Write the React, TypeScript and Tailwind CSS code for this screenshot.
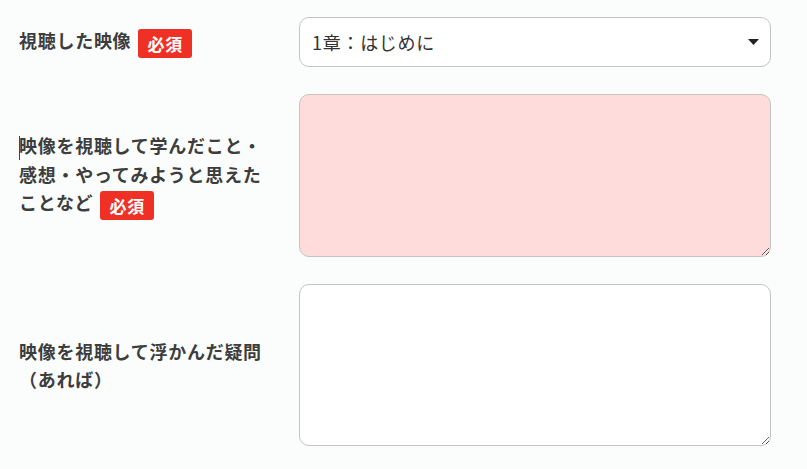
import React from 'react';

function Required() {
  return (
    <span className="inline-flex items-center justify-center ml-[7px] w-[54px] h-[29px] rounded-[3px] bg-[#ee3124] text-white text-[17px] font-bold tracking-[0.05em] align-middle leading-none">
      必須
    </span>
  );
}

export default function App() {
  return (
    <div className="min-h-[469px] bg-[#fbfdfd] pl-[19px] pr-[36px] pt-[17px] font-['Noto_Sans_CJK_JP','Noto_Sans',sans-serif] text-[#3d3d3d]">
      <form className="space-y-[27px]" onSubmit={(e) => e.preventDefault()}>
        {/* 視聴した映像 */}
        <div className="flex items-center">
          <label className="w-[280px] shrink-0 pr-[26px] text-[18px] font-bold tracking-[0.04em] leading-[28px]">
            視聴した映像<Required />
          </label>
          <div className="relative flex-1">
            <select
              defaultValue="1"
              className="w-full h-[50px] appearance-none rounded-[10px] border border-[#c4c4c4] bg-white pl-[12px] pr-10 text-[18px] tracking-[0.04em] text-[#333] outline-none"
            >
              <option value="1">1章：はじめに</option>
              <option value="2">2章</option>
            </select>
            <svg className="pointer-events-none absolute right-[12px] top-[22px]" width="11" height="6" viewBox="0 0 11 6">
              <path d="M0 0h11L5.5 6z" fill="#222" />
            </svg>
          </div>
        </div>

        {/* 学んだこと */}
        <div className="flex items-center">
          <label className="w-[280px] shrink-0 pr-[26px] text-[18px] font-bold tracking-[0.04em] leading-[28px]">
            <span className="inline-block w-px h-[24px] bg-[#444] align-middle -mr-px" />
            映像を視聴して学んだこと・感想・やってみようと思えたことなど<Required />
          </label>
          <textarea className="flex-1 h-[163px] rounded-[10px] border border-[#c4c4c4] bg-[#ffdcdc] p-3 text-[16px] outline-none" />
        </div>

        {/* 疑問 */}
        <div className="flex items-center">
          <label className="w-[280px] shrink-0 pr-[26px] text-[18px] font-bold tracking-[0.04em] leading-[28px]">
            映像を視聴して浮かんだ疑問（あれば）
          </label>
          <textarea className="flex-1 h-[162px] rounded-[10px] border border-[#c4c4c4] bg-white p-3 text-[16px] outline-none" />
        </div>
      </form>
    </div>
  );
}
